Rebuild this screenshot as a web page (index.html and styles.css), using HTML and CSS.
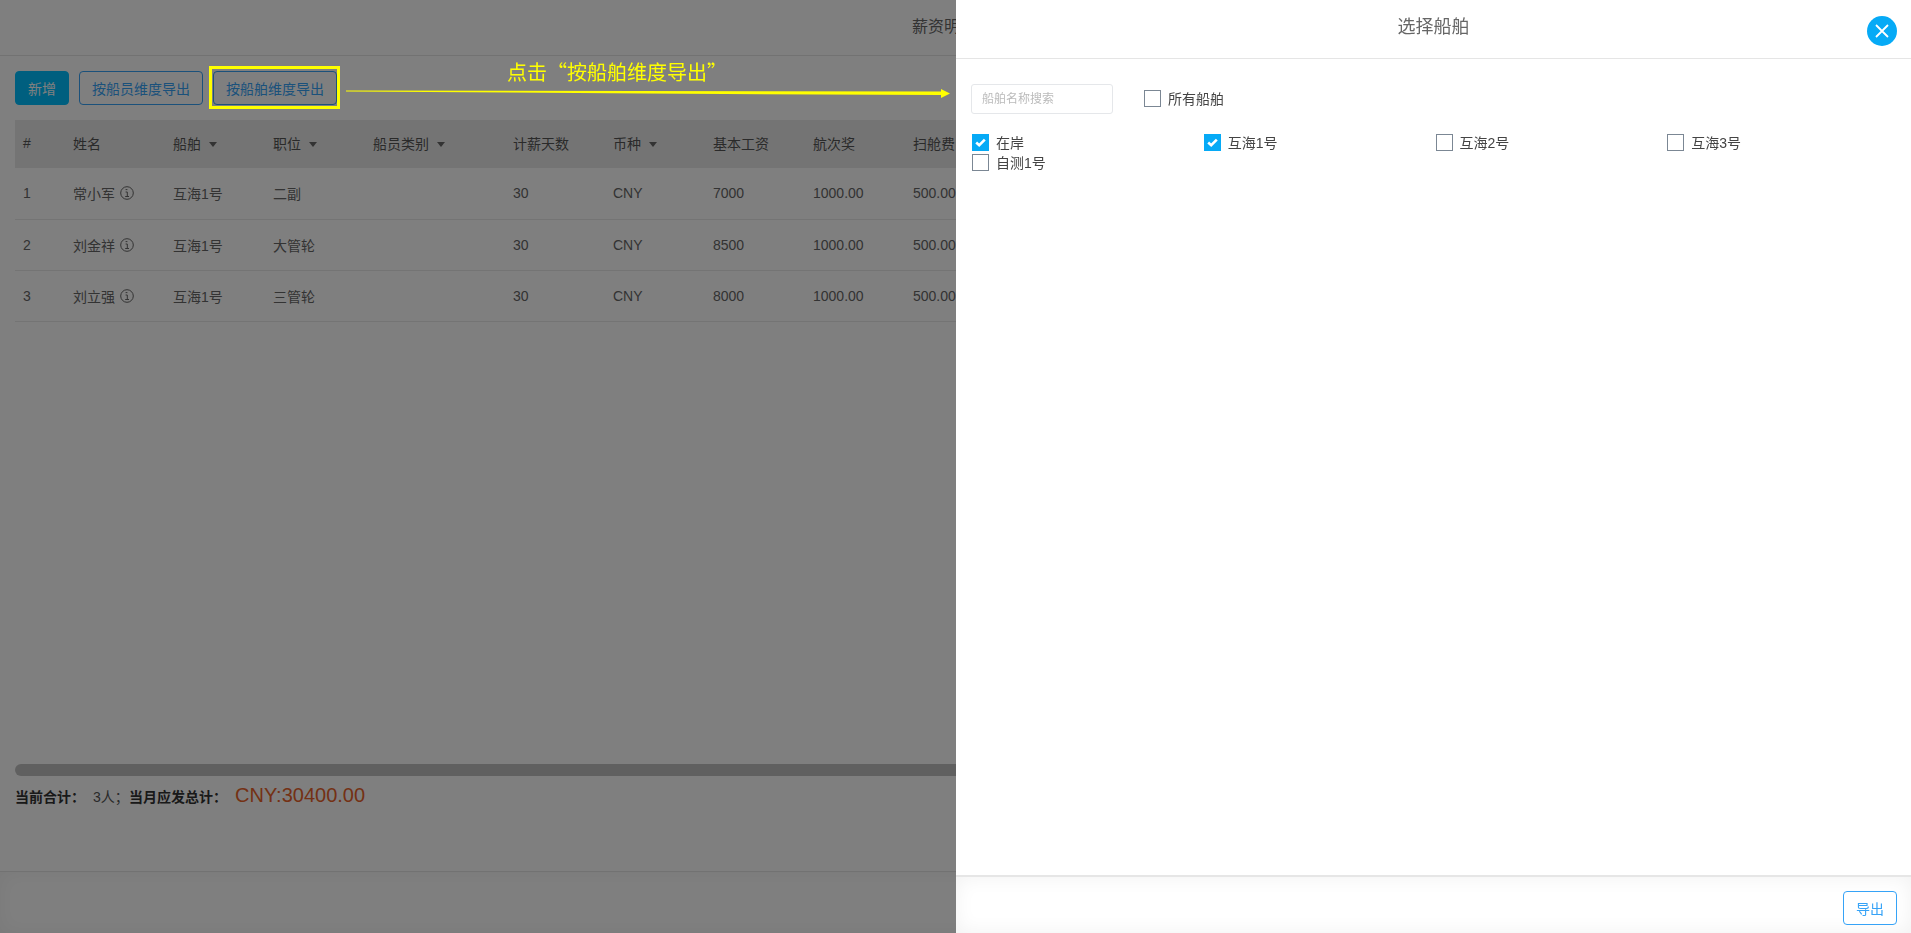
FILE: index.html
```html
<!DOCTYPE html>
<html lang="zh-CN">
<head>
<meta charset="utf-8">
<title>薪资明细</title>
<link rel="stylesheet" href="styles.css">
</head>
<body>
<svg class="defs" width="0" height="0" aria-hidden="true">
  <symbol id="info" viewBox="0 0 14 14">
    <circle cx="7" cy="7" r="6.3" fill="none" stroke="currentColor" stroke-width="1"/>
    <path d="M5.6 3.6h1.8M5.6 6h1.7v4.4M5.2 10.5h3.8" fill="none" stroke="currentColor" stroke-width="1"/>
  </symbol>
</svg>
<div class="page">
  <header class="topbar"><span class="topbar-title">薪资明细</span></header>
  <div class="toolbar">
    <button class="btn btn-primary">新增</button>
    <button class="btn btn-outline">按船员维度导出</button>
    <button class="btn btn-outline">按船舶维度导出</button>
  </div>
  <main class="table-wrap">
    <table class="grid">
      <colgroup>
        <col class="c50"><col class="c100"><col class="c100"><col class="c100"><col class="c140"><col class="c100"><col class="c100"><col class="c100"><col class="c100"><col class="c100">
      </colgroup>
      <thead>
        <tr>
          <th>#</th><th>姓名</th>
          <th>船舶<i class="caret"></i></th>
          <th>职位<i class="caret"></i></th>
          <th>船员类别<i class="caret"></i></th>
          <th>计薪天数</th>
          <th>币种<i class="caret"></i></th>
          <th>基本工资</th><th>航次奖</th><th>扫舱费</th>
        </tr>
      </thead>
      <tbody>
        <tr><td>1</td><td>常小军<svg class="info"><use href="#info"/></svg></td><td>互海1号</td><td>二副</td><td></td><td>30</td><td>CNY</td><td>7000</td><td>1000.00</td><td>500.00</td></tr>
        <tr><td>2</td><td>刘金祥<svg class="info"><use href="#info"/></svg></td><td>互海1号</td><td>大管轮</td><td></td><td>30</td><td>CNY</td><td>8500</td><td>1000.00</td><td>500.00</td></tr>
        <tr><td>3</td><td>刘立强<svg class="info"><use href="#info"/></svg></td><td>互海1号</td><td>三管轮</td><td></td><td>30</td><td>CNY</td><td>8000</td><td>1000.00</td><td>500.00</td></tr>
      </tbody>
    </table>
  </main>
  <div class="scrollbar"></div>
  <div class="summary">
    <b class="sum-label">当前合计：</b><span class="sum-count">3人；</span><b class="sum-label">当月应发总计：</b><span class="sum-total">CNY:30400.00</span>
  </div>
  <div class="page-footer"></div>
</div>

<div class="overlay"></div>

<div class="note-box"></div>
<div class="note-text">点击“按船舶维度导出”</div>
<svg class="note-arrow" width="620" height="20" viewBox="0 0 620 20" aria-hidden="true">
  <polygon fill="#ffff00" points="0,6.5 595,7.4 595,5 604,9.5 595,14 595,11 300,9.6 0,7.4"/>
</svg>

<aside class="panel">
  <div class="panel-head">
    <h2 class="panel-title">选择船舶</h2>
    <button class="panel-close" aria-label="关闭">
      <svg width="14" height="14" viewBox="0 0 14 14"><path d="M1 1L13 13M13 1L1 13" stroke="#fff" stroke-width="1.8" fill="none"/></svg>
    </button>
  </div>
  <div class="panel-body">
    <div class="search-row">
      <input class="search" placeholder="船舶名称搜索">
      <label class="check"><i class="box"></i>所有船舶</label>
    </div>
    <div class="ship-grid">
      <label class="check"><i class="box on"><svg width="11" height="9" viewBox="0 0 11 9"><path d="M1.2 4.5L4.2 7.2L9.8 1.6" stroke="#fff" stroke-width="2.6" fill="none"/></svg></i>在岸</label>
      <label class="check"><i class="box on"><svg width="11" height="9" viewBox="0 0 11 9"><path d="M1.2 4.5L4.2 7.2L9.8 1.6" stroke="#fff" stroke-width="2.6" fill="none"/></svg></i>互海1号</label>
      <label class="check"><i class="box"></i>互海2号</label>
      <label class="check"><i class="box"></i>互海3号</label>
      <label class="check"><i class="box"></i>自测1号</label>
    </div>
  </div>
  <div class="panel-foot"><button class="btn-export">导出</button></div>
</aside>
</body>
</html>
```

FILE: styles.css
```css
* { box-sizing: border-box; }
html, body { margin: 0; height: 100%; overflow: hidden; }
body {
  font-family: "Liberation Sans", "Noto Sans CJK SC", sans-serif;
  font-size: 14px;
  color: #555;
  background: #fff;
}
.defs { position: absolute; }

.page { height: 933px; display: flex; flex-direction: column; overflow: hidden; }
.topbar { height: 56px; border-bottom: 1px solid #e4e4e4; padding: 17px 0 0 912px; flex: none; }
.topbar-title { font-size: 16px; color: #666; line-height: 20px; }

.toolbar { display: flex; gap: 10px; padding: 15px 15px 0; flex: none; }
.btn {
  height: 34px; padding: 0 12px; border-radius: 4px;
  font: inherit; background: #fff; white-space: nowrap;
}
.btn-primary { width: 54px; background: #00beff; border: 1px solid #00beff; color: #fff; }
.btn-outline { width: 124px; border: 1px solid #36a3f7; color: #36a3f7; }

.table-wrap { flex: 1; padding: 15px 0 0 15px; overflow: hidden; }
.grid { border-collapse: collapse; table-layout: fixed; width: 990px; }
.c50 { width: 50px; } .c100 { width: 100px; } .c140 { width: 140px; }
.grid th { height: 48px; background: #e9e9e9; font-weight: 400; text-align: left; padding: 0 8px 2px; color: #555; }
.grid td { height: 51px; padding: 0 8px; border-bottom: 1px solid #e8e8e8; color: #666; white-space: nowrap; }
.caret {
  display: inline-block; margin-left: 8px; vertical-align: 2px;
  border-left: 4.5px solid transparent; border-right: 4.5px solid transparent; border-top: 5px solid #666;
}
.info { width: 14px; height: 14px; margin-left: 5px; vertical-align: -1px; color: #666; }

.scrollbar { height: 12px; margin-left: 15px; background: #c1c1c1; border-radius: 6px 0 0 6px; flex: none; }
.summary { height: 95px; padding: 9px 0 0 15px; display: flex; align-items: flex-start; flex: none; color: #555; }
.sum-label { font-weight: 700; color: #333; line-height: 20px; margin-top: 2px; white-space: nowrap; }
.sum-count { margin: 2px 0 0 8px; line-height: 20px; width: 36px; white-space: nowrap; }
.sum-total { margin-left: 8px; font-size: 20px; line-height: 22px; color: #e8622a; margin-top: -1px; }
.page-footer { height: 62px; flex: none; border-top: 1px solid #e4e4e4; box-shadow: inset 0 0 20px rgba(0,0,0,.05); }

.overlay { position: fixed; inset: 0; background: rgba(0,0,0,.5); }

.note-box { position: fixed; left: 209px; top: 66px; width: 131px; height: 43px; border: 3px solid #ffff00; }
.note-text { position: fixed; left: 507px; top: 58px; font-family: "Noto Sans CJK SC", sans-serif; font-size: 20px; line-height: 28px; color: #ffff00; white-space: nowrap; }
.note-arrow { position: fixed; left: 346px; top: 83.5px; }

.panel {
  position: fixed; left: 956px; top: 0; width: 955px; height: 933px;
  background: #fff; display: flex; flex-direction: column;
}
.panel-head { position: relative; height: 59px; border-bottom: 1px solid #e5e5e5; flex: none; }
.panel-title { margin: 0; padding-top: 15px; text-align: center; font-size: 18px; line-height: 24px; font-weight: 400; color: #666; }
.panel-close {
  position: absolute; left: 911px; top: 16px; width: 30px; height: 30px; padding: 0;
  border: 0; border-radius: 50%; background: #06aaf6;
  display: flex; align-items: center; justify-content: center;
}
.panel-body { flex: 1; padding: 25px 15px 0; }
.search-row { display: flex; align-items: center; gap: 31px; height: 30px; }
.search {
  width: 142px; height: 30px; padding: 0 10px; border: 1px solid #e5e7ea; border-radius: 3px;
  font: 12px "Liberation Sans", "Noto Sans CJK SC", sans-serif; outline: 0;
}
.search::placeholder { color: #bbb; }
.check { display: flex; align-items: center; gap: 7px; height: 20px; font-size: 14px; line-height: 18px; color: #444; white-space: nowrap; }
.box {
  width: 17px; height: 17px; border: 1px solid #7b8794; flex: none; margin-top: -2px;
  display: flex; align-items: center; justify-content: center; background: #fff;
}
.box.on { border-color: #06aaf6; background: #06aaf6; }
.ship-grid { display: grid; grid-template-columns: repeat(4, 231.75px); grid-auto-rows: 20px; margin: 19px 0 0 1px; }
.panel-foot {
  height: 58px; flex: none; border-top: 2px solid #e6e6e6; padding: 14px 14px 0 0;
  display: flex; justify-content: flex-end; align-items: flex-start;
  box-shadow: inset 0 0 20px rgba(0,0,0,.06);
}
.btn-export {
  width: 54px; height: 34px; padding: 0; border: 1px solid #36a3f7; border-radius: 4px;
  background: #fff; color: #36a3f7; font: inherit;
}
```
